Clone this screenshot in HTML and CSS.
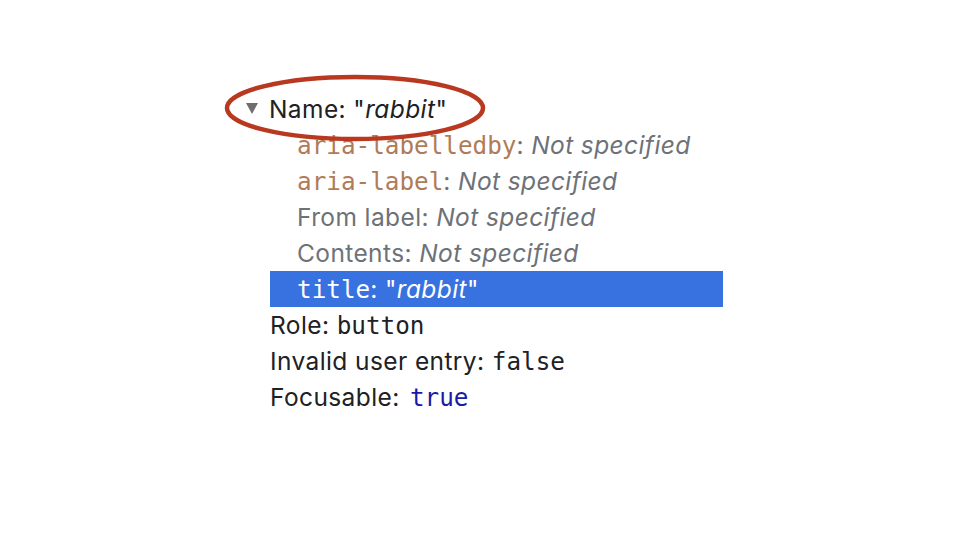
FILE: index.html
```html
<!DOCTYPE html>
<html>
<head>
<meta charset="utf-8">
<link rel="stylesheet" href="styles.css">
</head>
<body>
<div class="tree">
  <div class="row name-row">
    <span class="tri"></span>
    <span class="txt">Name: "<i>rabbit</i>"</span>
  </div>
  <div class="row child"><span class="attr">aria-labelledby</span><span class="dim">: <i>Not specified</i></span></div>
  <div class="row child"><span class="attr">aria-label</span><span class="dim">: <i>Not specified</i></span></div>
  <div class="row child dim">From label: <i>Not specified</i></div>
  <div class="row child dim">Contents: <i>Not specified</i></div>
  <div class="row child selected"><span class="mono">title</span>: "<i>rabbit</i>"</div>
  <div class="row">Role: <span class="mono">button</span></div>
  <div class="row">Invalid user entry: <span class="mono">false</span></div>
  <div class="row">Focusable: <span class="mono kw">true</span></div>
  <svg class="ring" width="270" height="76" viewBox="0 0 270 76">
    <ellipse cx="135" cy="38" rx="128" ry="31" fill="none" stroke="#b8391f" stroke-width="4.5"/>
  </svg>
</div>
</body>
</html>
```

FILE: styles.css
```css
html, body {
  margin: 0;
  padding: 0;
  background: #ffffff;
}
body {
  width: 960px;
  height: 540px;
  overflow: hidden;
}
.tree {
  position: relative;
  padding-top: 91px;
  padding-left: 270px;
  font-family: Inter, "Liberation Sans", Arial, sans-serif;
  font-size: 24.5px;
  letter-spacing: 0.4px;
  color: #202124;
}
.row {
  height: 36px;
  line-height: 36px;
  white-space: nowrap;
  width: 453px;
}
.name-row {
  display: flex;
  align-items: center;
  margin-left: -24px;
}
.tri {
  width: 0;
  height: 0;
  border-left: 6.5px solid transparent;
  border-right: 6.5px solid transparent;
  border-top: 11px solid #6e6e6e;
  margin-right: 11px;
  margin-top: -2px;
}
.child {
  padding-left: 27px;
  box-sizing: border-box;
}
.mono,
.attr {
  font-family: "DejaVu Sans Mono", "Liberation Mono", monospace;
  font-size: 24.3px;
  letter-spacing: 0;
}
.kw {
  margin-left: 3px;
  color: #1a1aa6;
}
.attr {
  color: #b07b56;
}
.dim {
  color: #6d7278;
}
.selected {
  background: #3871e0;
  color: #ffffff;
}
.ring {
  position: absolute;
  left: 220px;
  top: 70px;
}
```
